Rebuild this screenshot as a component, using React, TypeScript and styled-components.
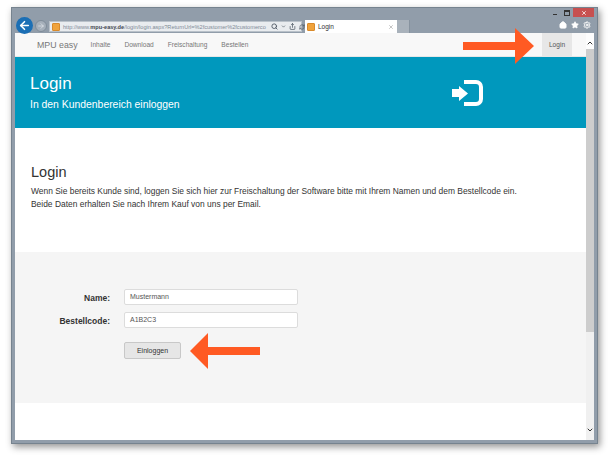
import React from 'react'
import styled, { createGlobalStyle } from 'styled-components'
import { ArrowLeft, ArrowRight, ChevronDown, ChevronUp, Home, RefreshCw, Search, Settings, Share, Star, X } from 'lucide-react'

const GlobalStyle = createGlobalStyle`
  html, body {
    margin: 0;
    padding: 0;
    background: #fff;
    overflow: hidden;
  }
  body {
    font-family: "Liberation Sans", Arial, sans-serif;
    color: #333;
  }
`

const Page = styled.div`
  width: 610px;
  height: 455px;
  padding: 7px 0 0 11px;
  box-sizing: border-box;
  position: relative;
`

const BrowserWindow = styled.div`
  width: 587px;
  height: 437px;
  box-sizing: border-box;
  background: #919daa;
  border: 1px solid #76838f;
  padding: 0 3px 3px 3px;
  display: flex;
  flex-direction: column;
  box-shadow: 2px 3px 7px rgba(0, 0, 0, 0.42);
`

const Chrome = styled.div`
  height: 25px;
  flex: none;
  display: flex;
  position: relative;
`

const BackButton = styled.div`
  width: 17px;
  height: 17px;
  margin: 9px 0 0 1px;
  border-radius: 50%;
  background: #1b6fb5;
  color: #fff;
  display: flex;
  align-items: center;
  justify-content: center;
  flex: none;
`

const ForwardButton = styled.div`
  width: 12px;
  height: 12px;
  box-sizing: border-box;
  margin: 12px 0 0 2px;
  border-radius: 50%;
  border: 1px solid #7f8c99;
  background: #a5afba;
  color: #e6eaee;
  display: flex;
  align-items: center;
  justify-content: center;
  flex: none;
`

const AddressBar = styled.div`
  width: 253px;
  height: 11px;
  box-sizing: border-box;
  margin: 13px 0 0 2px;
  background: #e9ecef;
  border: 1px solid #b9c1c9;
  display: flex;
  align-items: center;
  font-size: 5.6px;
  color: #7f8b97;
  white-space: nowrap;
  flex: none;
`

const Favicon = styled.span`
  width: 6px;
  height: 6px;
  margin: 0 3px 0 2px;
  flex: none;
  background: #f0a33c;
  border: 1px solid #d98a2b;
  border-radius: 1px;
`

const UrlText = styled.span`
  width: 207px;
  flex: none;
  b {
    color: #3f4750;
  }
`

const BarIcons = styled.span`
  display: flex;
  align-items: center;
  gap: 3px;
  color: #4b5561;
  margin-left: 1px;
`

const ActiveTab = styled.div`
  width: 92px;
  height: 13px;
  margin: 12px 0 0 3px;
  background: #fff;
  display: flex;
  align-items: center;
  font-size: 6.5px;
  color: #333;
  flex: none;
  box-sizing: border-box;
`

const TabTitle = styled.span`
  flex: 1;
`

const TabClose = styled.span`
  color: #8b8b8b;
  display: flex;
  margin-right: 3px;
`

const NewTab = styled.div`
  width: 13px;
  height: 13px;
  margin-top: 12px;
  background: #a9b2bb;
  border-right: 1px solid #87939f;
  box-sizing: border-box;
  flex: none;
`

const CaptionButtons = styled.div`
  position: absolute;
  top: 0;
  right: 0;
  display: flex;
  align-items: flex-start;
`

const CaptionGlyph = styled.span`
  width: 12px;
  height: 9px;
  display: flex;
  align-items: center;
  justify-content: center;
`

const MinBar = styled.span`
  width: 4px;
  height: 1px;
  margin-top: 4px;
  background: #333;
`

const MaxBox = styled.span`
  width: 4px;
  height: 3px;
  border: 1px solid #333;
  border-top-width: 2px;
`

const CloseButton = styled.span`
  width: 21px;
  height: 9px;
  background: #c75050;
  color: #fff;
  display: flex;
  align-items: center;
  justify-content: center;
`

const ToolIcons = styled.div`
  position: absolute;
  top: 13px;
  right: 3px;
  display: flex;
  gap: 4px;
  color: #fff;
`

const Viewport = styled.div`
  flex: 1;
  display: flex;
  min-height: 0;
  background: #fff;
`

const Content = styled.div`
  flex: 1;
  min-width: 0;
  display: flex;
  flex-direction: column;
`

const Navbar = styled.nav`
  height: 24px;
  flex: none;
  background: #f8f8f8;
  border-bottom: 1px solid #e7e7e7;
  box-sizing: border-box;
  display: flex;
  align-items: center;
  padding-left: 22px;
  font-size: 6.6px;
  color: #777;
`

const Brand = styled.span`
  font-size: 8.8px;
  margin-right: 13px;
`

const NavLink = styled.span`
  margin-right: 14px;
`

const NavActive = styled.span`
  margin-left: auto;
  margin-right: 14px;
  width: 30px;
  align-self: stretch;
  background: #e7e7e7;
  color: #555;
  display: flex;
  align-items: center;
  justify-content: center;
`

const Banner = styled.header`
  height: 71px;
  flex: none;
  background: #0098bd;
  color: #fff;
  display: flex;
  align-items: center;
  justify-content: space-between;
  padding: 0 103px 0 15px;
  box-sizing: border-box;
`

const BannerTitle = styled.h1`
  margin: 0 0 5px;
  font-size: 17px;
  line-height: 19px;
  font-weight: 400;
`

const BannerSub = styled.p`
  margin: 0;
  font-size: 10.4px;
  line-height: 13px;
`

const Intro = styled.section`
  height: 124px;
  flex: none;
  padding: 36px 0 0 16px;
  box-sizing: border-box;
`

const IntroTitle = styled.h2`
  margin: 0 0 4px;
  font-size: 14.5px;
  line-height: 17px;
  font-weight: 400;
`

const IntroText = styled.p`
  margin: 0;
  font-size: 8.43px;
  line-height: 13px;
  color: #333;
  white-space: nowrap;
`

const FormPanel = styled.section`
  height: 151px;
  flex: none;
  background: #f5f5f5;
  padding-top: 37px;
  box-sizing: border-box;
  display: grid;
  grid-template-columns: 95px 174px;
  grid-auto-rows: min-content;
  column-gap: 14px;
  row-gap: 7px;
`

const FieldLabel = styled.label`
  font-size: 8.5px;
  line-height: 10px;
  padding-top: 2px;
  font-weight: 700;
  text-align: right;
  align-self: center;
  color: #333;
`

const TextInput = styled.div`
  height: 16px;
  box-sizing: border-box;
  background: #fff;
  border: 1px solid #dcdcdc;
  border-radius: 2px;
  padding-left: 5px;
  font-size: 7px;
  line-height: 14px;
  color: #555;
`

const SubmitButton = styled.div`
  grid-column: 2;
  width: 57px;
  height: 17px;
  margin-top: 7px;
  box-sizing: border-box;
  background: #e6e6e6;
  border: 1px solid #c8c8c8;
  border-radius: 2px;
  font-size: 7px;
  line-height: 15px;
  text-align: center;
  color: #333;
`

const Scrollbar = styled.div`
  width: 8px;
  flex: none;
  background: linear-gradient(#fdfdfd 16px, #f0f0f0 16px);
  display: flex;
  flex-direction: column;
  justify-content: space-between;
  position: relative;
  color: #333;
`

const ScrollThumb = styled.div`
  position: absolute;
  top: 16px;
  left: 0;
  right: 0;
  height: 283px;
  background: #cdcdcd;
`

const ScrollArrow = styled.span`
  height: 8px;
  display: flex;
  align-items: center;
  justify-content: center;
  margin: 6px 0;
`

const Arrow = styled.svg<{ $left: number; $top: number }>`
  position: absolute;
  left: ${(p) => p.$left}px;
  top: ${(p) => p.$top}px;
`

const App: React.FC = () => {
  return (
    <Page>
      <GlobalStyle />
      <BrowserWindow>
        <Chrome>
          <BackButton>
            <ArrowLeft size={13} strokeWidth={3} />
          </BackButton>
          <ForwardButton>
            <ArrowRight size={8} strokeWidth={2} />
          </ForwardButton>
          <AddressBar>
            <Favicon />
            <UrlText>
              http://www.<b>mpu-easy.de</b>/login/login.aspx?ReturnUrl=%2fcustomer%2fcustomerco
            </UrlText>
            <BarIcons>
              <Search size={7} strokeWidth={3} />
              <ChevronDown size={5} strokeWidth={3} />
              <Share size={7} strokeWidth={2.5} />
              <RefreshCw size={6} strokeWidth={2.5} />
            </BarIcons>
          </AddressBar>
          <ActiveTab>
            <Favicon />
            <TabTitle>Login</TabTitle>
            <TabClose>
              <X size={6} strokeWidth={2} />
            </TabClose>
          </ActiveTab>
          <NewTab />
          <CaptionButtons>
            <CaptionGlyph>
              <MinBar />
            </CaptionGlyph>
            <CaptionGlyph>
              <MaxBox />
            </CaptionGlyph>
            <CloseButton>
              <X size={6} strokeWidth={3} />
            </CloseButton>
          </CaptionButtons>
          <ToolIcons>
            <Home size={8} strokeWidth={3} fill="#fff" />
            <Star size={8} fill="#fff" />
            <Settings size={8} strokeWidth={3} />
          </ToolIcons>
        </Chrome>
        <Viewport>
          <Content>
            <Navbar>
              <Brand>MPU easy</Brand>
              <NavLink>Inhalte</NavLink>
              <NavLink>Download</NavLink>
              <NavLink>Freischaltung</NavLink>
              <NavLink>Bestellen</NavLink>
              <NavActive>Login</NavActive>
            </Navbar>
            <Banner>
              <div>
                <BannerTitle>Login</BannerTitle>
                <BannerSub>In den Kundenbereich einloggen</BannerSub>
              </div>
              <svg width="31" height="26" viewBox="0 0 31 26" fill="none">
                <path d="M0 9h7V6l9 7.500-9 7.500v-4H0z" fill="#fff" />
                <path d="M12 2h12a5 5 0 0 1 5 5v12a5 5 0 0 1-5 5H12" stroke="#fff" strokeWidth="4" />
              </svg>
            </Banner>
            <Intro>
              <IntroTitle>Login</IntroTitle>
              <IntroText>
                Wenn Sie bereits Kunde sind, loggen Sie sich hier zur Freischaltung der Software bitte mit Ihrem Namen und dem Bestellcode ein.
                <br />
                Beide Daten erhalten Sie nach Ihrem Kauf von uns per Email.
              </IntroText>
            </Intro>
            <FormPanel>
              <FieldLabel>Name:</FieldLabel>
              <TextInput>Mustermann</TextInput>
              <FieldLabel>Bestellcode:</FieldLabel>
              <TextInput>A1B2C3</TextInput>
              <SubmitButton>Einloggen</SubmitButton>
            </FormPanel>
          </Content>
          <Scrollbar>
            <ScrollThumb />
            <ScrollArrow>
              <ChevronUp size={8} strokeWidth={3} />
            </ScrollArrow>
            <ScrollArrow>
              <ChevronDown size={8} strokeWidth={3} />
            </ScrollArrow>
          </Scrollbar>
        </Viewport>
      </BrowserWindow>
      <Arrow $left={463} $top={28} width={72} height={36} viewBox="0 0 72 36">
        <path d="M0 14h52V0l19 18-19 18V22H0z" fill="#ff5a23" />
      </Arrow>
      <Arrow $left={190} $top={333} width={71} height={36} viewBox="0 0 71 36">
        <path d="M70 14H18V0L0 18l18 18V22h52z" fill="#ff5a23" />
      </Arrow>
    </Page>
  )
}

export default App
